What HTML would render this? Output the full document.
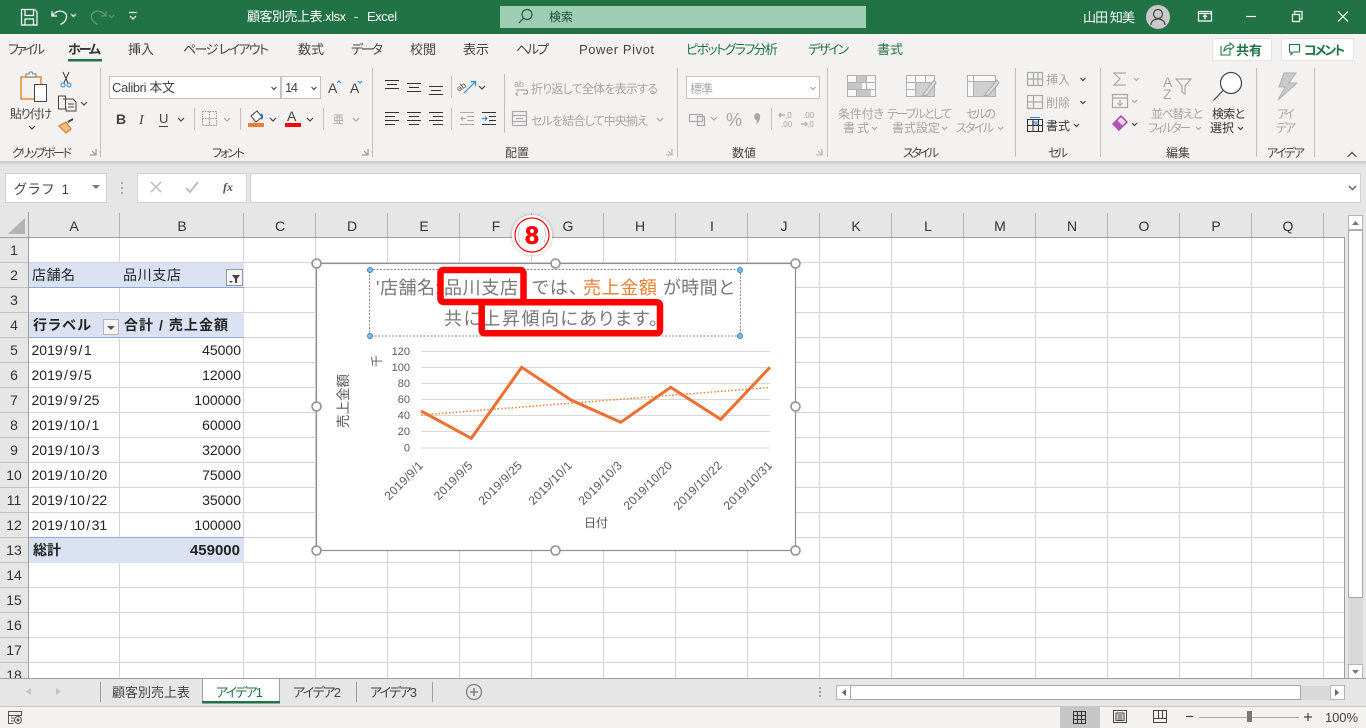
<!DOCTYPE html>
<html lang="ja"><head><meta charset="utf-8"><title>Excel</title>
<style>
html,body{margin:0;padding:0;width:1366px;height:728px;overflow:hidden;background:#fff}
svg{display:block}
text{font-family:"Liberation Sans","Noto Sans CJK JP",sans-serif;fill:#444;font-size:13px;font-feature-settings:"palt"}
.c{fill:none;stroke:#444;stroke-width:1.2}
.d{fill:none;stroke:#a8a8a8;stroke-width:1.2}
.g{fill:#a6a6a6}
.k{fill:#222;font-size:14px}
.h{fill:#333;font-size:14px;text-anchor:middle}
.b{font-weight:700}
.l{font-size:12px;fill:#444}
.r{font-size:12px}
.x{fill:#595959;font-size:12px;letter-spacing:.3px;text-anchor:end}
.y{fill:#595959;font-size:11px;text-anchor:end}
.t{font-size:18px;fill:#777}
</style></head><body>
<svg width="1366" height="728" viewBox="0 0 1366 728" xmlns="http://www.w3.org/2000/svg">
<defs><linearGradient id="sh" x1="0" y1="0" x2="0" y2="1"><stop offset="0" stop-color="#c8c8c8"/><stop offset="1" stop-color="#e6e6e6"/></linearGradient>
<filter id="bs" x="-30%" y="-30%" width="160%" height="160%"><feDropShadow dx="0" dy="0" stdDeviation="1.5" flood-color="#000" flood-opacity=".3"/></filter></defs>

<!-- backgrounds -->
<rect width="1366" height="728" fill="#fff"/>
<rect y="34" width="1366" height="127" fill="#f3f2f1"/>
<rect y="161" width="1366" height="51" fill="#e6e6e6"/>
<rect y="161" width="1366" height="5" fill="url(#sh)"/>

<!-- title bar -->
<rect width="1366" height="34" fill="#217346"/>
<g fill="none" stroke="#fff" stroke-width="1.2">
<path d="M21.5 9.5h13l2.5 2.500v13h-15.500z M25 9.500v6h8.500v-6 M25 25v-6h8.500v6"/>
<path d="M52 11v5h5 M52.500 15.500c3-4 8-6 12-3 4 3 2 9-4 12"/>
<path d="M71 14l2.500 2.500 2.500-2.500"/>
<g stroke="#5f9c7b"><path d="M106 11v5h-5 M105.500 15.500c-3-4-8-6-12-3-4 3-2 9 4 12"/><path d="M109 15l2.500 2.500 2.500-2.500"/></g>
<path d="M129 12.500h8 M130 16l3 3 3-3"/>
</g>
<text x="247" y="21" style="fill:#fff" textLength="99">顧客別売上表.xlsx</text>
<text x="354" y="21" style="fill:#fff">-</text>
<text x="367" y="21" style="fill:#fff" textLength="30">Excel</text>
<rect x="500" y="6" width="366" height="22" fill="#9fcdb3"/>
<circle cx="527" cy="14.500" r="5" fill="none" stroke="#1f5c3a" stroke-width="1.200"/><path d="M523.500 18l-4.500 5" stroke="#1f5c3a" stroke-width="1.200"/>
<text x="549" y="21" style="fill:#1c4f33;font-size:12px" textLength="24">検索</text>
<text x="1083" y="22" style="fill:#fff" textLength="52">山田 知美</text>
<circle cx="1158" cy="17" r="12" fill="#c9c9c9"/>
<circle cx="1158" cy="14" r="4.500" fill="none" stroke="#444" stroke-width="1.200"/><path d="M1151 25c0-8 14-8 14 0" fill="none" stroke="#444" stroke-width="1.200"/>
<g fill="none" stroke="#fff" stroke-width="1.200">
<path d="M1198.500 11.500h13v9.500h-13z M1198.500 13.500h13 M1205 19.500v-4 M1203 17l2-2 2 2"/>
<path d="M1246 16.500h10"/>
<path d="M1292.500 14.500h7v7h-7z M1294.500 14v-2.500h7.500v7.500h-2.500"/>
<path d="M1338 11.500l10 10 M1348 11.500l-10 10"/>
</g>

<!-- ribbon tabs -->
<text x="8" y="54" textLength="37">ファイル</text>
<text x="68" y="54" class="b" style="fill:#333" textLength="33">ホーム</text>
<rect x="68" y="59" width="34" height="2.500" fill="#217346"/>
<text x="128" y="54" textLength="26">挿入</text>
<text x="183" y="54" textLength="86">ページ レイアウト</text>
<text x="298" y="54" textLength="26">数式</text>
<text x="351" y="54" textLength="32">データ</text>
<text x="410" y="54" textLength="26">校閲</text>
<text x="463" y="54" textLength="26">表示</text>
<text x="516" y="54" textLength="33">ヘルプ</text>
<text x="579" y="54" textLength="75">Power Pivot</text>
<text x="686" y="54" style="fill:#217346" textLength="92">ピボットグラフ分析</text>
<text x="808" y="54" style="fill:#217346" textLength="41">デザイン</text>
<text x="877" y="54" style="fill:#217346" textLength="26">書式</text>

<rect x="1212.500" y="38.500" width="59" height="22" fill="#fff" stroke="#e3e3e3"/>
<path d="M1221 46v9h9v-4 M1224 51c0-4 3-6 6-6v-2l4 3.500-4 3.500v-2c-2 0-4 1-6 3z" fill="none" stroke="#217346" stroke-width="1.100"/>
<text x="1236" y="55" class="b" style="fill:#217346" textLength="26">共有</text>
<rect x="1281.500" y="38.500" width="72" height="22" fill="#fff" stroke="#e3e3e3"/>
<path d="M1289.500 44.500h10v7.500h-6l-2.500 2.500v-2.500h-1.500z" fill="none" stroke="#217346" stroke-width="1.100"/>
<text x="1304" y="55" class="b" style="fill:#217346" textLength="41">コメント</text>

<!-- ribbon separators -->
<path d="M100.500 68v89 M372.500 68v89 M677.500 68v89 M827.500 68v89 M1015.500 68v89 M1100.500 68v89 M1256.500 68v89 M1314.500 68v89 M194.500 108v22 M240.500 108v22 M323.500 108v22 M451.500 76v22 M451.500 108v22 M504.500 74v59 M771.500 108v22" stroke="#bfbfbf" fill="none"/>

<!-- clipboard -->
<path d="M21 77h20v22h-20z" fill="#f3f2f1" stroke="#e8892e" stroke-width="1.500"/>
<path d="M26 77v-3h3l1-2h2l1 2h3v3z" fill="#fff" stroke="#777"/>
<rect x="34.500" y="84.500" width="12" height="17" fill="#fff" stroke="#444"/>
<text x="10" y="118" class="l" textLength="42">貼り付け</text>
<path class="c" d="M29 126l3 3 3-3"/>
<path d="M63 72l5 11 M69 72l-5 11" stroke="#444" fill="none" stroke-width="1.100"/><circle cx="63" cy="85" r="2" fill="none" stroke="#2e86d0"/><circle cx="69" cy="85" r="2" fill="none" stroke="#2e86d0"/>
<path d="M58.500 96h7v13h-7z M63 99h10l3 3v9h-10v-3" fill="#f3f2f1" stroke="#444"/><path d="M68 104h6 M68 107h6" stroke="#444"/>
<path class="c" d="M81 102l3 3 3-3"/>
<path d="M59 126l7-4 5 7-5 4z" fill="#f0c08a" stroke="#e07b1f" stroke-width="1.200"/><path d="M68 122l5-3" stroke="#444" stroke-width="2"/>
<text x="12" y="157" class="l" textLength="60">クリップボード</text>
<path d="M90 155h6v-6 M92 151l3 3" fill="none" stroke="#888"/>

<!-- font -->
<rect x="109.500" y="76.500" width="171" height="22" fill="#fff" stroke="#c2c2c2"/>
<rect x="281.500" y="76.500" width="39" height="22" fill="#fff" stroke="#c2c2c2"/>
<text x="112" y="92" textLength="63" style="fill:#444">Calibri 本文</text>
<text x="285" y="92" textLength="13">14</text>
<path class="c" d="M271.500 87l2.500 2.500 2.500-2.500 M311.500 87l2.500 2.500 2.500-2.500"/>
<text x="328" y="93" style="font-size:14px">A</text><path d="M337 83l2-2 2 2" fill="none" stroke="#2e86d0"/>
<text x="350" y="93" style="font-size:14px">A</text><path d="M358 81l2 2 2-2" fill="none" stroke="#2e86d0"/>
<text x="116" y="124" class="b" style="font-size:14px;fill:#444">B</text>
<text x="139" y="124" style="font-size:14px;font-style:italic;font-family:'Liberation Serif',serif">I</text>
<text x="159" y="123" style="font-size:13px">U</text><path d="M159 126.500h9" stroke="#444"/>
<path class="c" d="M178 118l3 3 3-3"/>
<path d="M202.500 111.500h14v14h-14z M209.500 111.500v14 M202.500 118.500h14" fill="none" stroke="#999" stroke-dasharray="1.500 1"/><path class="d" d="M224 118l3 3 3-3"/>
<path d="M251 116l6-5 5 6-6 5z" fill="#fff" stroke="#444"/><path d="M261 119c2-2 1-4 0-5" stroke="#2e75b6" fill="none" stroke-width="2"/>
<rect x="248" y="123" width="16" height="4" fill="#ed7d31"/><path class="c" d="M270 118l3 3 3-3"/>
<text x="287" y="121" style="font-size:14px">A</text><rect x="285" y="123" width="16" height="4" fill="#f00"/><path class="c" d="M307 118l3 3 3-3"/>
<text x="333" y="123" class="g" style="font-size:11px;fill:#a6a6a6">亜</text><path class="d" d="M353 118l3 3 3-3"/>
<text x="212" y="157" class="l" textLength="33">フォント</text>
<path d="M362 155h6v-6 M364 151l3 3" fill="none" stroke="#888"/>

<!-- alignment -->
<path d="M385 80.500h14 M387 84.500h10 M385 88.500h14 M407 83.500h14 M409 87.500h10 M407 91.500h14 M429 86.500h14 M431 90.500h10 M429 94.500h14 M385 112.500h14 M385 116.500h10 M385 120.500h14 M385 124.500h10 M407 112.500h14 M409 116.500h10 M407 120.500h14 M409 124.500h10 M429 112.500h14 M433 116.500h10 M429 120.500h14 M433 124.500h10" stroke="#333" fill="none"/>
<text x="459" y="92" transform="rotate(-35 459 92)" style="font-size:8.500px">ab</text><path d="M464 93l11-11 M471 81.500h4.500v4.500" stroke="#2e86d0" fill="none" stroke-width="1.200"/>
<path class="c" d="M479 86l3 3 3-3"/>
<path d="M460 112.500h14 M467 116.500h7 M467 120.500h7 M460 124.500h14 M466 118.500h-5 M463 116.500l-2 2 2 2" stroke="#aaa" fill="none"/>
<path d="M482 112.500h14 M489 116.500h7 M489 120.500h7 M482 124.500h14" stroke="#333" fill="none"/><path d="M482 118.500h5 M485 116.500l2 2-2 2" stroke="#2e86d0" fill="none"/>
<text x="514" y="87" class="g" style="font-size:9px;fill:#a6a6a6">ab</text><path class="d" d="M516 90h10c2 0 2 4 0 4h-3 M518 92l-2 2 2 2"/>
<text x="531" y="93" class="r g" style="fill:#a6a6a6" textLength="127">折り返して全体を表示する</text>
<path class="d" d="M512.500 111.500h14v14h-14z M512.500 115.500h14 M512.500 121.500h14 M516 118.500h7"/>
<text x="531" y="125" class="r g" style="fill:#a6a6a6" textLength="117">セルを結合して中央揃え</text>
<path class="d" d="M657 118l3 3 3-3"/>
<text x="505" y="157" class="l" textLength="24">配置</text>
<path d="M666 155h6v-6 M668 151l3 3" fill="none" stroke="#aaa"/>

<!-- number -->
<rect x="686.500" y="76.500" width="133" height="22" fill="#fff" stroke="#c2c2c2"/>
<text x="690" y="93" class="g" style="fill:#a6a6a6;font-size:12px" textLength="23">標準</text>
<path class="d" d="M810.500 87l2.500 2.500 2.500-2.500"/>
<path class="d" d="M689.500 114.500h13v7h-13z M697.500 116.500h7v9h-7z"/><path class="d" d="M711 117l3 3 3-3"/>
<text x="726" y="126" class="g" style="font-size:18px;fill:#a6a6a6">%</text>
<path d="M755 114c3-2 6 0 5 4-.5 3-2 5-4 6 1-2 1-3 0-4-2-1-2-4-1-6z" fill="#a6a6a6"/>
<text x="785" y="118" class="g" style="font-size:8px;fill:#a6a6a6">,0</text><text x="781" y="127" class="g" style="font-size:8px;fill:#a6a6a6">.00</text><path class="d" d="M785 115h-6 M781 113l-2 2 2 2"/>
<text x="803" y="118" class="g" style="font-size:8px;fill:#a6a6a6">.00</text><text x="807" y="127" class="g" style="font-size:8px;fill:#a6a6a6">,0</text><path class="d" d="M801 124h6 M805 122l2 2-2 2"/>
<text x="732" y="157" class="l" textLength="24">数値</text>
<path d="M816 155h6v-6 M818 151l3 3" fill="none" stroke="#aaa"/>

<!-- styles -->
<path d="M847.500 75.500h28v21h-28z M847.500 82.500h28 M847.500 89.500h28 M856.500 75.500v21 M866.500 75.500v21" fill="#f8f8f8" stroke="#b0b0b0"/><rect x="857" y="76" width="9" height="6" fill="#c6c6c6"/><rect x="848" y="83" width="14" height="6" fill="#c6c6c6"/><rect x="857" y="90" width="14" height="6" fill="#c6c6c6"/>
<text x="838" y="118" class="r g" style="fill:#a6a6a6" textLength="46">条件付き</text>
<text x="843" y="132" class="r g" style="fill:#a6a6a6" textLength="26">書式</text><path class="d" d="M872 127l2.500 2.500 2.500-2.500"/>
<path d="M906.500 75.500h28v21h-28z M906.500 82.500h28 M906.500 89.500h28 M915.500 75.500v21 M925.500 75.500v21" fill="#f8f8f8" stroke="#b0b0b0"/><rect x="916" y="83" width="18" height="13" fill="#cfcfcf"/><path d="M934 80l-9 12-3 4 5-1 9-12z" fill="#ddd" stroke="#a8a8a8"/>
<text x="887" y="118" class="r g" style="fill:#a6a6a6" textLength="65">テーブルとして</text>
<text x="892" y="132" class="r g" style="fill:#a6a6a6" textLength="48">書式設定</text><path class="d" d="M942 127l2.500 2.500 2.500-2.500"/>
<path d="M967.500 75.500h28v21h-28z M967.500 81.500h28 M973.500 75.500v21" fill="#f8f8f8" stroke="#b0b0b0"/><rect x="974" y="82" width="21" height="14" fill="#cfcfcf"/><path d="M997 80l-10 12-3 4 5-1 10-12z" fill="#ddd" stroke="#a8a8a8"/>
<text x="966" y="118" class="r g" style="fill:#a6a6a6" textLength="30">セルの</text>
<text x="956" y="132" class="r g" style="fill:#a6a6a6" textLength="38">スタイル</text><path class="d" d="M998 127l2.500 2.500 2.500-2.500"/>
<text x="903" y="157" class="l" textLength="36">スタイル</text>

<!-- cells -->
<path class="d" d="M1027.500 72.500h15v13h-15z M1033.500 72.500v13 M1027.500 79h15 M1038 72.500v13"/>
<text x="1046" y="84" class="r g" style="fill:#a6a6a6" textLength="24">挿入</text><path class="c" d="M1080.500 78l2.500 2.500 2.500-2.500"/>
<path class="d" d="M1027.500 95.500h15v13h-15z M1033.500 95.500v13 M1027.500 102h15"/>
<text x="1046" y="107" class="r g" style="fill:#a6a6a6" textLength="24">削除</text><path class="c" d="M1080.500 101l2.500 2.500 2.500-2.500"/>
<rect x="1032" y="121" width="7" height="5" fill="#7db7e8"/><path d="M1027.500 119.500h15v12h-15z M1033 119.500v12 M1038.500 119.500v12 M1027.500 125.500h15" fill="none" stroke="#333"/><path d="M1030 117.500h10" stroke="#2e86d0"/>
<text x="1046" y="130" class="r" style="fill:#333" textLength="24">書式</text><path class="c" d="M1074 124l2.500 2.500 2.500-2.500"/>
<text x="1048" y="157" class="l" textLength="20">セル</text>

<!-- editing -->
<path class="d" d="M1126 73h-12l6 6-6 6h12"/><path class="d" d="M1134 78l2.500 2.500 2.500-2.500"/>
<path class="d" d="M1112.500 94.500h15v13h-15z M1112.500 98h15 M1120 100v6 M1117.500 103l2.500 2.500 2.500-2.500"/><path class="d" d="M1132 100l2.500 2.500 2.500-2.500"/>
<path d="M1113 124l8-8 6 6-8 8z" fill="#f3d4ef" stroke="#a43ea8" stroke-width="1.400"/><path d="M1113 124l4-4 6 6-4 4z" fill="#b356b6"/><path class="c" d="M1132 123l2.500 2.500 2.500-2.500"/>
<text x="1163" y="87" class="g" style="font-size:14px;fill:#a6a6a6">A</text><text x="1163" y="99" class="g" style="font-size:14px;fill:#a6a6a6">Z</text>
<path class="d" d="M1176 79h15l-6 7v8l-3-2v-6z"/>
<text x="1151" y="118" class="r g" style="fill:#a6a6a6" textLength="52">並べ替えと</text>
<text x="1148" y="132" class="r g" style="fill:#a6a6a6" textLength="43">フィルター</text><path class="d" d="M1196 127l2.500 2.500 2.500-2.500"/>
<circle cx="1231" cy="83" r="10.500" fill="#fff" stroke="#444" stroke-width="1.200"/><path d="M1223 90.500l-9.500 10" stroke="#444" stroke-width="1.200"/>
<text x="1212" y="118" class="r" style="fill:#333" textLength="33">検索と</text>
<text x="1210" y="132" class="r" style="fill:#333" textLength="24">選択</text><path class="c" d="M1238 127l2.500 2.500 2.500-2.500"/>
<text x="1166" y="157" class="l" textLength="24">編集</text>

<!-- ideas -->
<path d="M1284 73h12l-7 10h8l-19 17 7-13h-6z" fill="#c9c9c9" stroke="#b0b0b0"/>
<text x="1277" y="118" class="r g" style="fill:#a6a6a6" textLength="18">アイ</text>
<text x="1276" y="132" class="r g" style="fill:#a6a6a6" textLength="20">デア</text>
<text x="1267" y="157" class="l" textLength="38">アイデア</text>
<path d="M1347.500 157l4.500-4.500 4.500 4.500" fill="none" stroke="#444" stroke-width="1.200"/>

<!-- formula bar -->
<rect x="5.500" y="173.500" width="101" height="29" fill="#fff" stroke="#d2d2d2"/>
<text x="14" y="194" style="fill:#444;font-size:13.500px" textLength="55">グラフ 1</text>
<path d="M92 185h8l-4 4z" fill="#777"/>
<path d="M122 182v2 M122 187v2 M122 192v2" stroke="#999" stroke-width="1.500"/>
<rect x="137.500" y="173.500" width="109" height="29" fill="#fff" stroke="#d2d2d2"/>
<rect x="250.500" y="173.500" width="1110" height="29" fill="#fff" stroke="#d2d2d2"/>
<path d="M151 182l10 10 M161 182l-10 10" stroke="#bdbdbd" stroke-width="1.500" fill="none"/>
<path d="M186 188l4 4 8-10" stroke="#bdbdbd" stroke-width="2" fill="none"/>
<text x="223" y="191" style="font-family:'Liberation Serif',serif;font-style:italic;font-weight:700;font-size:12px;fill:#555">fx</text>
<path d="M1349 186l3.500 3.500 3.500-3.500" stroke="#666" stroke-width="1.500" fill="none"/>

<!-- headers -->
<rect y="212" width="1366" height="25" fill="#e6e6e6"/>
<rect y="237" width="28" height="441" fill="#e6e6e6"/>
<path d="M25 218v16h-17z" fill="#b3b3b3"/>
<path d="M28.500 212v466 M0 237.500h1344.500" stroke="#9e9e9e" fill="none"/>
<path d="M119.500 213v24 M243.500 213v24 M315.500 213v24 M387.500 213v24 M459.500 213v24 M531.500 213v24 M603.500 213v24 M675.500 213v24 M747.500 213v24 M819.500 213v24 M891.500 213v24 M963.500 213v24 M1035.500 213v24 M1107.500 213v24 M1179.500 213v24 M1251.500 213v24 M1323.500 213v24" stroke="#b5b5b5" fill="none"/>
<path d="M0 262.500h28 M0 287.500h28 M0 312.500h28 M0 337.500h28 M0 362.500h28 M0 387.500h28 M0 412.500h28 M0 437.500h28 M0 462.500h28 M0 487.500h28 M0 512.500h28 M0 537.500h28 M0 562.500h28 M0 587.500h28 M0 612.500h28 M0 637.500h28 M0 662.500h28" stroke="#c0c0c0" fill="none"/>
<text class="h" x="74" y="231">A</text><text class="h" x="182" y="231">B</text><text class="h" x="280" y="231">C</text><text class="h" x="352" y="231">D</text><text class="h" x="424" y="231">E</text><text class="h" x="496" y="231">F</text><text class="h" x="568" y="231">G</text><text class="h" x="640" y="231">H</text><text class="h" x="712" y="231">I</text><text class="h" x="784" y="231">J</text><text class="h" x="856" y="231">K</text><text class="h" x="928" y="231">L</text><text class="h" x="1000" y="231">M</text><text class="h" x="1072" y="231">N</text><text class="h" x="1144" y="231">O</text><text class="h" x="1216" y="231">P</text><text class="h" x="1288" y="231">Q</text>
<text class="h" x="14" y="255">1</text><text class="h" x="14" y="280">2</text><text class="h" x="14" y="305">3</text><text class="h" x="14" y="330">4</text><text class="h" x="14" y="355">5</text><text class="h" x="14" y="380">6</text><text class="h" x="14" y="405">7</text><text class="h" x="14" y="430">8</text><text class="h" x="14" y="455">9</text><text class="h" x="14" y="480">10</text><text class="h" x="14" y="505">11</text><text class="h" x="14" y="530">12</text><text class="h" x="14" y="555">13</text><text class="h" x="14" y="580">14</text><text class="h" x="14" y="605">15</text><text class="h" x="14" y="630">16</text><text class="h" x="14" y="655">17</text><text class="h" x="14" y="680">18</text>

<!-- gridlines -->
<path d="M119.500 238v440 M243.500 238v440 M315.500 238v440 M387.500 238v440 M459.500 238v440 M531.500 238v440 M603.500 238v440 M675.500 238v440 M747.500 238v440 M819.500 238v440 M891.500 238v440 M963.500 238v440 M1035.500 238v440 M1107.500 238v440 M1179.500 238v440 M1251.500 238v440 M1323.500 238v440 M29 262.500h1315 M29 287.500h1315 M29 312.500h1315 M29 337.500h1315 M29 362.500h1315 M29 387.500h1315 M29 412.500h1315 M29 437.500h1315 M29 462.500h1315 M29 487.500h1315 M29 512.500h1315 M29 537.500h1315 M29 562.500h1315 M29 587.500h1315 M29 612.500h1315 M29 637.500h1315 M29 662.500h1315" stroke="#d4d4d4" fill="none"/>

<!-- pivot -->
<rect x="29" y="263" width="215" height="24" fill="#d9e1f2"/><path d="M29 287.500h215" stroke="#8ea9db"/>
<rect x="29" y="313" width="215" height="24" fill="#d9e1f2"/><path d="M29 337.500h215" stroke="#8ea9db"/>
<rect x="29" y="538" width="215" height="25" fill="#d9e1f2"/><path d="M29 537.500h215" stroke="#8ea9db"/>
<text class="k" x="32" y="280" textLength="43">店舗名</text>
<text class="k" x="123" y="280" textLength="58">品川支店</text>
<rect x="226.500" y="269.500" width="16" height="16" fill="#f5f5f5" stroke="#999"/><path d="M232 275h8l-3 4v4h-2v-4z M229 281h4l-2 2z" fill="#444"/>
<text class="k b" x="33" y="330" textLength="58">行ラベル</text>
<rect x="103.500" y="319.500" width="15" height="15" fill="#f5f5f5" stroke="#b5b5b5"/><path d="M107 326h8l-4 4z" fill="#555"/>
<text class="k b" x="124" y="330" textLength="104">合計 / 売上金額</text>
<text class="k" x="31.500" y="355">2019<tspan dx="1.400">/</tspan><tspan dx="1.400">9</tspan><tspan dx="1.400">/</tspan><tspan dx="1.400">1</tspan></text><text class="k" x="241" y="355" text-anchor="end">45000</text>
<text class="k" x="31.500" y="380">2019<tspan dx="1.400">/</tspan><tspan dx="1.400">9</tspan><tspan dx="1.400">/</tspan><tspan dx="1.400">5</tspan></text><text class="k" x="241" y="380" text-anchor="end">12000</text>
<text class="k" x="31.500" y="405">2019<tspan dx="1.400">/</tspan><tspan dx="1.400">9</tspan><tspan dx="1.400">/</tspan><tspan dx="1.400">25</tspan></text><text class="k" x="241" y="405" text-anchor="end">100000</text>
<text class="k" x="31.500" y="430">2019<tspan dx="1.400">/</tspan><tspan dx="1.400">10</tspan><tspan dx="1.400">/</tspan><tspan dx="1.400">1</tspan></text><text class="k" x="241" y="430" text-anchor="end">60000</text>
<text class="k" x="31.500" y="455">2019<tspan dx="1.400">/</tspan><tspan dx="1.400">10</tspan><tspan dx="1.400">/</tspan><tspan dx="1.400">3</tspan></text><text class="k" x="241" y="455" text-anchor="end">32000</text>
<text class="k" x="31.500" y="480">2019<tspan dx="1.400">/</tspan><tspan dx="1.400">10</tspan><tspan dx="1.400">/</tspan><tspan dx="1.400">20</tspan></text><text class="k" x="241" y="480" text-anchor="end">75000</text>
<text class="k" x="31.500" y="505">2019<tspan dx="1.400">/</tspan><tspan dx="1.400">10</tspan><tspan dx="1.400">/</tspan><tspan dx="1.400">22</tspan></text><text class="k" x="241" y="505" text-anchor="end">35000</text>
<text class="k" x="31.500" y="530">2019<tspan dx="1.400">/</tspan><tspan dx="1.400">10</tspan><tspan dx="1.400">/</tspan><tspan dx="1.400">31</tspan></text><text class="k" x="241" y="530" text-anchor="end">100000</text>
<text class="k b" x="33" y="555" textLength="28">総計</text><text class="k b" x="240" y="555" text-anchor="end" style="font-size:15px">459000</text>

<!-- chart -->
<rect x="316.500" y="263.500" width="479" height="287" fill="#fff" stroke="#8f8f8f" stroke-width="1.200"/>
<path d="M421 351.500h349 M421 367.500h349 M421 383.500h349 M421 399.500h349 M421 415.500h349 M421 431.500h349 M421 448h349" stroke="#d9d9d9" fill="none"/>
<text class="y" x="410" y="355">120</text><text class="y" x="410" y="371">100</text><text class="y" x="410" y="387">80</text><text class="y" x="410" y="403">60</text><text class="y" x="410" y="419">40</text><text class="y" x="410" y="435">20</text><text class="y" x="410" y="451.500">0</text>
<path d="M421 415l349-27.500" stroke="#ed7d31" stroke-width="1.500" stroke-dasharray="1.500 2" fill="none"/>
<polyline points="421,411 471.300,438.300 521.700,367.300 571,400 620.700,422.300 670.700,387.300 720.700,419.300 770,367.300" fill="none" stroke="#ed7031" stroke-width="3"/>
<text class="x" transform="translate(424 466) rotate(-45)">2019/9/1</text>
<text class="x" transform="translate(473.500 466) rotate(-45)">2019/9/5</text>
<text class="x" transform="translate(523 466) rotate(-45)">2019/9/25</text>
<text class="x" transform="translate(573 466) rotate(-45)">2019/10/1</text>
<text class="x" transform="translate(623 466) rotate(-45)">2019/10/3</text>
<text class="x" transform="translate(673 466) rotate(-45)">2019/10/20</text>
<text class="x" transform="translate(723 466) rotate(-45)">2019/10/22</text>
<text class="x" transform="translate(773 466) rotate(-45)">2019/10/31</text>
<text x="584" y="527" style="font-size:12px;fill:#595959" textLength="24">日付</text>
<text transform="translate(348 428) rotate(-90)" style="font-size:13.500px;fill:#595959" textLength="54">売上金額</text>
<text transform="translate(381 367) rotate(-90)" style="font-size:12px;fill:#595959">千</text>

<text class="t" x="376" y="294" textLength="59">'店舗名</text>
<text class="t" x="435" y="294">:</text>
<text class="t" x="444" y="294" textLength="74">品川支店</text>
<text class="t" x="520" y="294">'</text>
<text class="t" x="532" y="294" textLength="46">では、</text>
<text class="t" x="583" y="294" textLength="74" style="fill:#ed7d31">売上金額</text>
<text class="t" x="663" y="294" textLength="71">が時間と</text>
<text class="t" x="444" y="325" textLength="214">共に上昇傾向にあります。</text>
<rect x="369.500" y="269.500" width="371" height="66.500" fill="none" stroke="#8a8a8a" stroke-dasharray="2 1.500"/>
<g fill="#7fbdf0" stroke="#2e86d0"><circle cx="370" cy="270" r="2.500"/><circle cx="740" cy="270" r="2.500"/><circle cx="370" cy="336" r="2.500"/><circle cx="740" cy="336" r="2.500"/></g>
<g fill="#fff" stroke="#8f8f8f" stroke-width="1.500"><circle cx="316.500" cy="263.500" r="4.500"/><circle cx="555.500" cy="263.500" r="4.500"/><circle cx="795.500" cy="263.500" r="4.500"/><circle cx="316.500" cy="406.500" r="4.500"/><circle cx="795.500" cy="406.500" r="4.500"/><circle cx="316.500" cy="550.500" r="4.500"/><circle cx="555.500" cy="550.500" r="4.500"/><circle cx="795.500" cy="550.500" r="4.500"/></g>
<rect x="440.500" y="270" width="83" height="32" rx="3" fill="none" stroke="#f00" stroke-width="6.500"/>
<rect x="481.700" y="302.300" width="178.300" height="31" rx="3" fill="none" stroke="#f00" stroke-width="6.500"/>
<circle cx="532" cy="235" r="20" fill="#fff" filter="url(#bs)"/>
<circle cx="532" cy="235" r="17" fill="#fff" stroke="#f00" stroke-width="1.200"/>
<path d="M520 228c-2 4-2 10 0 14 M544 228c2 4 2 10 0 14" stroke="#ccc" fill="none"/>
<text x="532" y="244" text-anchor="middle" class="b" style="font-size:25px;fill:#f00;stroke:#f00;stroke-width:.6">8</text>

<!-- vertical scrollbar -->
<rect x="1345" y="212" width="21" height="466" fill="#e6e6e6"/>
<path d="M1344.500 237v441" stroke="#9e9e9e"/>
<rect x="1348" y="231" width="15" height="434" fill="#d9d9d9"/>
<rect x="1348.500" y="215.500" width="14" height="14" fill="#fff" stroke="#b5b5b5"/><path d="M1352 225l3.500-4 3.500 4z" fill="#777"/>
<rect x="1348.500" y="230.500" width="14" height="367" fill="#fff" stroke="#a6a6a6"/>
<rect x="1348.500" y="664.500" width="14" height="14" fill="#fff" stroke="#b5b5b5"/><path d="M1352 670h7l-3.500 4z" fill="#777"/>

<!-- sheet tabs -->
<rect y="678" width="1366" height="29" fill="#e6e6e6"/>
<path d="M0 678.500h202 M279 678.500h1087" stroke="#9e9e9e"/>
<path d="M0 706.500h1366" stroke="#c6c6c6"/>
<rect x="0" y="707" width="1366" height="21" fill="#f3f2f1"/>
<path d="M31 688l-5 3.500 5 3.500z M56 688l5 3.500-5 3.500z" fill="#c4c4c4"/>
<path d="M100.500 682v20 M356.500 682v20 M432.500 682v20 M202.500 678v24" stroke="#9e9e9e" fill="none"/>
<rect x="203" y="678" width="76" height="24" fill="#fff"/>
<path d="M202.500 678.500h77v24" stroke="#9e9e9e" fill="none"/>
<rect x="202" y="701" width="78" height="2.500" fill="#217346"/>
<text x="112" y="697" textLength="78" style="fill:#444">顧客別売上表</text>
<text x="216" y="697" textLength="47" style="fill:#217346">アイデア1</text>
<text x="293" y="697" textLength="48">アイデア2</text>
<text x="370" y="697" textLength="47">アイデア3</text>
<circle cx="474" cy="692" r="7.500" fill="none" stroke="#7f7f7f" stroke-width="1.300"/><path d="M470 692h8 M474 688v8" stroke="#7f7f7f" stroke-width="1.500"/>
<path d="M820 687v2 M820 691v2 M820 695v2" stroke="#a0a0a0" stroke-width="2"/>
<rect x="837" y="686" width="493" height="14" fill="#d9d9d9"/>
<rect x="836.500" y="685.500" width="14" height="14" fill="#fff" stroke="#b5b5b5"/><path d="M846 689v7l-4-3.500z" fill="#666"/>
<rect x="850.500" y="685.500" width="450" height="14" fill="#fff" stroke="#a6a6a6"/>
<rect x="1330.500" y="685.500" width="14" height="14" fill="#fff" stroke="#b5b5b5"/><path d="M1335 689v7l4-3.500z" fill="#666"/>

<!-- status bar -->
<path d="M8.500 711.500h13v4h-13z M8.500 715.500v8h5 M11 718h3 M11 721h3" fill="none" stroke="#555"/><circle cx="18" cy="720" r="3.500" fill="none" stroke="#555"/><circle cx="18" cy="720" r="1.500" fill="#555"/>
<rect x="1060" y="707" width="40" height="21" fill="#c6c6c6"/>
<path d="M1073.500 711.500h12v12h-12z M1077.500 711.500v12 M1081.500 711.500v12 M1073.500 715.500h12 M1073.500 719.500h12" fill="none" stroke="#333"/>
<path d="M1113.500 710.500h13v12h-13z M1116 713h8v7.500h-8z M1117.500 715h5 M1117.500 717h5 M1117.500 719h5" fill="none" stroke="#444"/>
<path d="M1153.500 710.500h13v12h-13z M1153.500 718.500h13 M1158.500 710.500v8 M1162.500 710.500v8" fill="none" stroke="#444"/>
<path d="M1186 716.500h7" stroke="#444" stroke-width="1.200"/>
<path d="M1199 717.500h100" stroke="#aaa"/><rect x="1247" y="711" width="5" height="11" fill="#777"/>
<path d="M1304 717h8 M1308 713v8" stroke="#444" stroke-width="1.200"/>
<text x="1325" y="722" textLength="33">100%</text>
</svg>
</body></html>
